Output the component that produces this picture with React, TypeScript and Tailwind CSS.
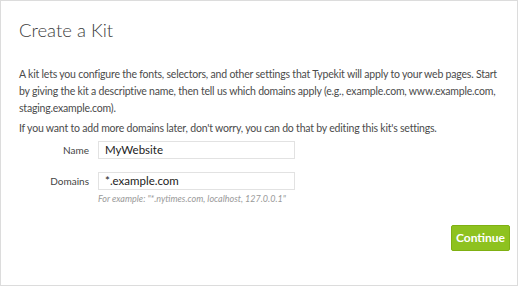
export default function App() {
  return (
    <div className="w-[520px] h-[287px] bg-white overflow-hidden">
      <div className="w-[518px] h-[286px] border border-[#dcdcdc] bg-white pl-[18px] pr-[4px] pt-[17px] text-[#4b4b4b] font-['Lato',sans-serif] flex flex-col">
        <h1 className="text-[18.5px] font-light text-[#3c3c3c] leading-[24px]">Create a Kit</h1>
        <p className="mt-[24px] text-[10.5px] leading-[17px] tracking-[-0.2px] whitespace-nowrap">
          A kit lets you configure the fonts, selectors, and other settings that Typekit will apply to your web pages. Start
          <br />
          by giving the kit a descriptive name, then tell us which domains apply (e.g., example.com, www.example.com,
          <br />
          staging.example.com).
        </p>
        <p className="mt-[3px] text-[10.5px] leading-[17px] tracking-[-0.2px]">
          If you want to add more domains later, don't worry, you can do that by editing this kit's settings.
        </p>
        <div className="mt-[4px] grid grid-cols-[70px_197px] gap-x-[9px] items-center">
          <label className="text-right text-[10px] text-[#444]">Name</label>
          <div className="h-[18px] border border-[#e2e2e2] flex items-center px-[6px] text-[11.5px] text-[#222]">MyWebsite</div>
          <div className="h-[13px]" />
          <div className="h-[13px]" />
          <label className="text-right text-[10px] text-[#444]">Domains</label>
          <div className="h-[18px] border border-[#e2e2e2] flex items-center px-[6px] text-[11.5px] text-[#222]">*.example.com</div>
          <div />
          <div className="mt-[2px] text-[9px] italic text-[#9a9a9a]">For example: "*.nytimes.com, localhost, 127.0.0.1"</div>
        </div>
        <div className="flex justify-end mt-[19px] pr-[3px]">
          <button className="w-[59px] h-[26px] bg-[#8ec21f] border border-[#7fb012] rounded-[2px] text-white font-bold text-[12px] leading-none">Continue</button>
        </div>
      </div>
    </div>
  );
}
